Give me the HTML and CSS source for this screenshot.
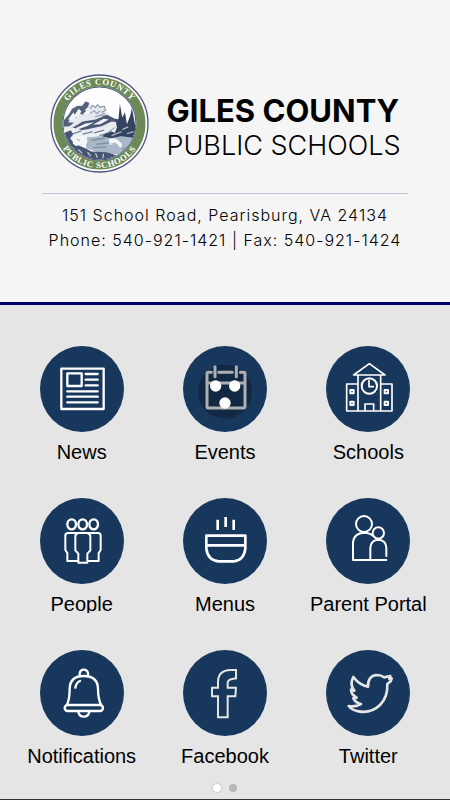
FILE: index.html
```html
<!DOCTYPE html>
<html lang="en">
<head>
  <meta charset="UTF-8">
  <meta name="viewport" content="width=device-width, initial-scale=1.0">
  <title>Giles County Public Schools</title>
  <link rel="stylesheet" href="styles.css">
</head>
<body>

<header class="header">
  <div class="brand">
    <!-- County seal -->
    <svg class="seal" viewBox="22 28 296 296" role="img" aria-label="Giles County seal">
      <defs>
        <path id="sealTop" d="M54 176 A116 116 0 0 1 286 176"/>
        <path id="sealBottom" d="M37 176 A133 133 0 0 0 303 176"/>
        <clipPath id="sealClip"><circle cx="170" cy="176" r="108"/></clipPath>
      </defs>
      <circle cx="170" cy="176" r="145" fill="#fff" stroke="#53577f" stroke-width="4"/>
      <circle cx="170" cy="176" r="124" fill="none" stroke="#6c8a57" stroke-width="27"/>
      <circle cx="170" cy="176" r="109" fill="#fdfdfe" stroke="#4d5a80" stroke-width="3"/>
      <g clip-path="url(#sealClip)">
        <path d="M60 166 L84 140 L98 124 L120 118 L128 110 L140 112 L152 126 L180 124 L188 140 L214 160 L225 166 L290 190 L280 240 L60 240Z" fill="#e6e9ee"/>
        <path d="M60 170 L78 150 L88 132 L104 124 L118 124 L128 110 L139 114 L136 126 L126 136 L139 142 L126 152 L110 146 L100 160 L88 156 L76 172 L94 174 L80 184 L60 186Z" fill="#56627d"/>
        <path d="M76 164 L92 142 L96 150 L108 132 L116 140 L106 154 L88 166Z M120 148 l14 -14 l8 8 l-14 12Z" fill="#f2f4f6"/>
        <path d="M142 132 l8 -10 l8 6 l6 -8 l8 8 l12 -4 l4 12 l-10 6 l8 8 M142 146 l12 -8 l8 8 l10 -8 M156 156 l20 -6 l16 8" fill="none" stroke="#9aa5b4" stroke-width="4"/>
        <path d="M84 192 L120 170 L158 164 L192 150 L216 162 L238 164 L236 174 L206 170 L176 184 L140 192 L116 196 L92 210Z" fill="#4b5875"/>
        <path d="M98 190 l30 -14 l26 -4 l-22 12 l-28 10Z M150 180 l32 -18 l16 2 l-26 14Z" fill="#eef0f3"/>
        <path d="M62 196 L90 188 L132 200 L204 186 L238 182 L238 212 L60 232Z" fill="#edf0f2"/>
        <path d="M92 206 l24 -8 M120 208 l30 -8 M154 204 l30 -8 M170 212 l20 -6" stroke="#75829a" stroke-width="4"/>
        <path d="M128 218 L196 212 L290 218 L290 262 L190 270 L130 250Z" fill="#a9b7c6"/>
        <path d="M146 226 L186 220 M160 238 L214 232 M150 248 L190 246 M236 252 L272 246" stroke="#7e91a8" stroke-width="4"/>
        <path d="M178 214 L200 198 L216 204 L222 188 L218 164 L226 170 L231 118 L238 158 L246 142 L252 178 L262 152 L267 130 L276 178 L290 200 L286 220 L234 214 L204 220Z" fill="#334360"/>
        <path d="M194 204 l22 -16 M206 212 l30 -12 M238 194 l18 -8 M252 206 l20 -6" stroke="#aab4c0" stroke-width="4"/>
        <path d="M60 206 L84 196 L92 208 L82 220 L94 236 L128 250 L146 260 L190 262 L222 272 L200 292 L120 292 L60 242Z" fill="#465573"/>
        <path d="M92 222 q8 -14 22 -8 l18 2 l2 14 l-8 16 l-10 -10 l-16 8 l-10 -8Z M198 222 q18 -6 28 4 l12 12 l-6 12 l-10 -14 l-22 4Z" fill="#f6f7f8"/>
        <path d="M80 240 l14 14 M106 254 l12 10 M134 262 l10 12 M158 264 l6 14 M182 266 l-2 14 M204 238 l16 -4 M102 222 l10 6" stroke="#b7c3cb" stroke-width="4"/>
      </g>
      <text class="seal-text"><textPath href="#sealTop" startOffset="50%" text-anchor="middle">GILES COUNTY</textPath></text>
      <text class="seal-text"><textPath href="#sealBottom" startOffset="50%" text-anchor="middle">PUBLIC SCHOOLS</textPath></text>
    </svg>
    <h1 class="title">
      <span class="title-county">GILES COUNTY</span>
      <span class="title-schools">PUBLIC SCHOOLS</span>
    </h1>
  </div>
  <address class="contact">
    <p>151 School Road, Pearisburg, VA 24134</p>
    <p>Phone: 540-921-1421 | Fax: 540-921-1424</p>
  </address>
</header>

<main class="main">
  <nav class="menu">
    <a class="item" href="#news">
      <svg class="icon" viewBox="29 16 252 258">
        <rect x="93" y="84" width="127" height="121" stroke-width="7"/>
        <rect x="111" y="98" width="43" height="38" stroke-width="7"/>
        <path d="M166 100H202M166 117H202M166 134H202M111 152H202M111 168H202M111 185H202" stroke-width="7"/>
      </svg>
      <span class="label">News</span>
    </a>
    <a class="item" href="#events">
      <svg class="icon" viewBox="33 16 252 258">
        <circle class="loader-back" cx="159" cy="153" r="81"/>
        <g class="dimmed">
          <path d="M118 95H109Q105 95 105 100V198Q105 202 110 202H214Q219 202 219 197V100Q219 95 214 95H205M140 95H181M106 127H218" stroke-width="9"/>
          <path d="M129 78V108M193 78V108" stroke-width="9"/>
        </g>
        <g class="loader-dots">
          <circle cx="131" cy="136" r="17"/>
          <circle cx="188" cy="136" r="17"/>
          <circle cx="159" cy="187" r="17"/>
        </g>
      </svg>
      <span class="label">Events</span>
    </a>
    <a class="item" href="#schools">
      <svg class="icon" viewBox="34 16 252 258">
        <path d="M117 103L164 69L211 103ZM130 104V211M198 104V211M129 130H96V211H232V130H199M151 210V190H177V210" stroke-width="5"/>
        <circle cx="164" cy="136" r="23" stroke-width="6"/>
        <path d="M163 119V138H176" stroke-width="5"/>
        <path d="M107 148H117V158H107ZM210 148H220V158H210ZM107 183H117V193H107ZM210 183H220V193H210Z" stroke-width="6"/>
      </svg>
      <span class="label">Schools</span>
    </a>
    <a class="item" href="#people">
      <svg class="icon" viewBox="29 25 252 258">
        <ellipse cx="124" cy="104" rx="13" ry="15" stroke-width="7"/>
        <ellipse cx="157" cy="104" rx="13" ry="15" stroke-width="7"/>
        <ellipse cx="190" cy="104" rx="13" ry="15" stroke-width="7"/>
        <path d="M113 130H203Q211 130 211 138V181L205 190V214H174M113 130Q105 130 105 138V181L111 190V214H141M144 130Q135 133 135 140V182L144 192V219H171V192L180 182V140Q180 133 171 130" stroke-width="6"/>
      </svg>
      <span class="label">People</span>
    </a>
    <a class="item" href="#menus">
      <svg class="icon" viewBox="33 24 252 258">
        <path d="M137 89V120M161 81V111M185 89V120" stroke-width="8" stroke-linecap="butt"/>
        <path d="M103 137H220V176Q216 211 185 214H140Q107 211 103 176ZM104 166H219" stroke-width="8"/>
      </svg>
      <span class="label">Menus</span>
    </a>
    <a class="item" href="#portal">
      <svg class="icon" viewBox="79 24 252 258">
        <circle cx="193" cy="102" r="24" stroke-width="6"/>
        <circle cx="236" cy="129" r="17" stroke-width="6"/>
        <path d="M260 210H160V158Q162 129 194 128Q210 128 221 138M212 208V174Q213 150 236 149Q259 150 260 174V198" stroke-width="6"/>
      </svg>
      <span class="label">Parent Portal</span>
    </a>
    <a class="item" href="#notifications">
      <svg class="icon" viewBox="59 16 252 258">
        <path d="M178 95V86Q180 75 190 75Q201 75 203 86V95M140 180Q148 162 148 132Q149 94 190 94Q232 94 233 132Q233 162 242 180" stroke-width="7"/>
        <rect x="133" y="181" width="115" height="18" rx="9" stroke-width="7"/>
        <path d="M174 201Q177 216 190 216Q204 216 207 201M165 129Q168 113 179 109" stroke-width="7"/>
      </svg>
      <span class="label">Notifications</span>
    </a>
    <a class="item" href="#facebook">
      <svg class="icon icon-soft" viewBox="33 16 252 258">
        <path d="M138 218V155H120V129H138V111Q139 77 175 76H192V101L180 103Q167 105 167 116V129H192L190 155H167V218Z" stroke-width="6" stroke-linejoin="miter"/>
      </svg>
      <span class="label">Facebook</span>
    </a>
    <a class="item" href="#twitter">
      <svg class="icon icon-soft" viewBox="34 16 252 258">
        <path d="M116 97Q134 121 160 126Q159 93 187 91Q200 91 208 98L227 94L224 103L231 101L228 110L218 118Q220 157 196 181Q169 207 132 200Q112 197 102 184Q119 188 139 178Q122 174 116 161L126 159Q110 151 109 135L119 138Q104 120 116 97Z" stroke-width="8"/>
      </svg>
      <span class="label">Twitter</span>
    </a>
  </nav>
  <div class="pager">
    <button class="dot dot-active" type="button" aria-label="Page 1"></button>
    <button class="dot" type="button" aria-label="Page 2"></button>
  </div>
</main>

</body>
</html>
```

FILE: styles.css
```css
* {
  box-sizing: border-box;
}

body {
  margin: 0;
  min-height: 100vh;
  display: flex;
  flex-direction: column;
  background-color: #e5e5e5;
  color: #000;
  font-family: "Liberation Sans", Arial, sans-serif;
}

.header {
  padding: 74px 42px 49px;
  background-color: #f5f5f5;
  border-bottom: 3px solid #000068;
  font-family: Inter, sans-serif;
}

.brand {
  display: flex;
  align-items: center;
  justify-content: center;
  gap: 18px;
  padding-bottom: 20px;
  border-bottom: 1px solid #c4c4d8;
}

.seal {
  flex: none;
  width: 99px;
  height: 99px;
}

.seal-text {
  fill: #fff;
  font-family: "Liberation Serif", serif;
  font-size: 26px;
  font-weight: bold;
  letter-spacing: 2px;
}

.title {
  margin: 0;
  padding-top: 8px;
  white-space: nowrap;
}

.title span {
  display: block;
  line-height: 35px;
}

.title-county {
  font-size: 31px;
  font-weight: 700;
}

.title-schools {
  font-size: 27px;
  font-weight: 300;
}

.contact {
  padding-top: 9px;
  font-size: 16px;
  font-style: normal;
  font-weight: 300;
  letter-spacing: 1px;
  line-height: 25px;
  text-align: center;
  white-space: nowrap;
}

.contact p {
  margin: 0;
}

.main {
  flex: 1;
  display: flex;
  flex-direction: column;
  justify-content: space-between;
  padding: 41px 10px 7px;
  border-bottom: 1px solid #333;
}

.menu {
  display: grid;
  grid-template-columns: repeat(3, 1fr);
  row-gap: 37px;
}

.item {
  display: flex;
  flex-direction: column;
  align-items: center;
  gap: 11px;
  color: #000;
  text-decoration: none;
}

.icon {
  flex: none;
  width: 84px;
  height: 86px;
  border-radius: 50%;
  background-color: #18375d;
  fill: none;
  stroke: #fff;
  stroke-linecap: round;
  stroke-linejoin: round;
}

.icon-soft {
  stroke: #e5e5e5;
}

.label {
  overflow: hidden;
  font-size: 20px;
  line-height: 18px;
  white-space: nowrap;
}

.loader-back {
  fill: #122843;
  stroke: none;
}

.dimmed {
  stroke: #adb0b3;
}

.loader-dots {
  fill: #fff;
  stroke: none;
}

.pager {
  display: flex;
  justify-content: center;
  gap: 8px;
}

.dot {
  width: 8px;
  height: 8px;
  padding: 0;
  border: none;
  border-radius: 50%;
  background-color: #b8b8b8;
}

.dot-active {
  background-color: #fff;
  box-shadow: 0 0 2px #aaa;
}
```
